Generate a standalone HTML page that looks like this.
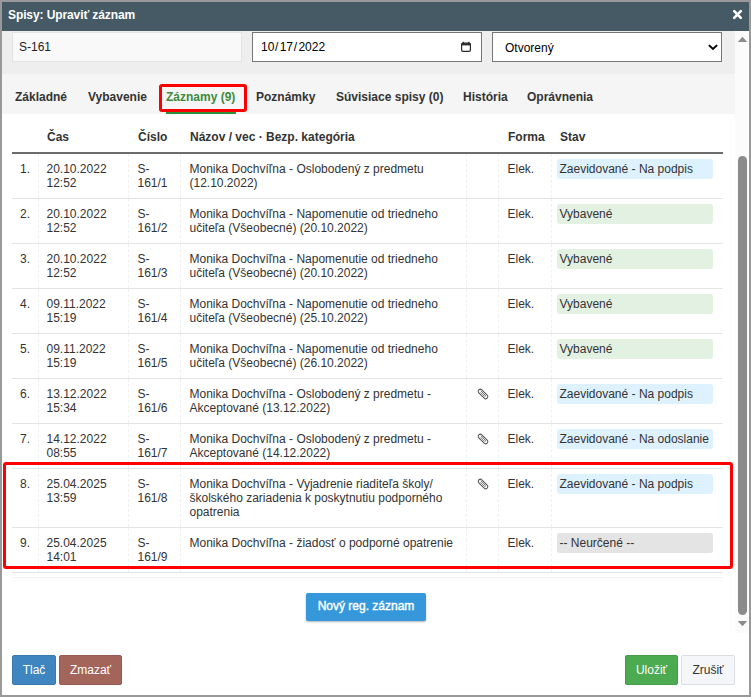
<!DOCTYPE html>
<html lang="sk">
<head>
<meta charset="utf-8">
<title>Spisy: Upraviť záznam</title>
<style>
*{box-sizing:border-box;margin:0;padding:0}
html,body{width:751px;height:697px;overflow:hidden;background:#fff}
body{font-family:"Liberation Sans",Arial,sans-serif;font-size:12px;line-height:14px;color:#333;position:relative}
#frame{position:absolute;left:0;top:0;width:751px;height:697px;border:2px solid #999;pointer-events:none;z-index:50}
#hdr{position:absolute;left:2px;top:2px;width:747px;height:29px;background:#455a64;color:#fff;font-weight:bold;padding:6px 0 0 6px;letter-spacing:-0.1px}
#close{position:absolute;left:729px;top:6px;width:13px;height:13px}
#top{position:absolute;left:2px;top:31px;width:733px;height:43px;background:#eee}
.inp{position:absolute;top:1px;height:30px;width:230px;background:#fff;border:1px solid #767676;padding:7px 0 0 7px;color:#000;font-size:12px}
#i1{left:10px;background:#f9f9f9;border-color:#e3e3e3;color:#222;padding-left:6px}
#i2{left:250px;padding-left:8px}
#i3{left:490px;padding-left:12px;padding-top:8px}
.sg{padding:0 1px}
.sg:first-child{padding-left:0.7px}
#tabs{position:absolute;left:2px;top:74px;width:733px;height:40px;background:#f5f5f5;font-weight:bold}
#tabs span{position:absolute;top:16px;white-space:nowrap}
#tabs .act{color:#3c8b3c}
#uline{position:absolute;left:164px;top:38px;width:70px;height:2px;background:#2f8f3a}
.red{position:absolute;border:3px solid #fe0000;border-radius:3px;z-index:20}
#sb{position:absolute;left:735px;top:31px;width:14px;height:602px;background:#fbfbfb}
#thumb{position:absolute;left:3px;top:125px;width:9px;height:459px;border-radius:4.5px;background:#8b8b8b}
.tri{position:absolute;left:3px;width:0;height:0;border-left:4.5px solid transparent;border-right:4.5px solid transparent}
#tu{top:6px;border-bottom:5px solid #8b8b8b}
#td{top:590px;border-top:5px solid #8b8b8b}
table{position:absolute;left:12px;top:122px;width:711px;border-collapse:collapse;table-layout:fixed}
th{text-align:left;font-weight:bold;padding:8px 0 8px 9px;border-bottom:2px solid #6c6c6c;height:31px;white-space:nowrap}
td{vertical-align:top;padding:8px 0 8px 8px;border-bottom:1px solid #e4e4e4;border-left:1px dashed #f1f1f1;height:45px}
td:first-child{border-left:none;padding-left:8px}
tr.l3 td{height:59px}
td:nth-child(3),td:nth-child(4),td:nth-child(6){padding-left:9px}
th:nth-child(3),th:nth-child(4),th:nth-child(6){padding-left:10px}
.bd{display:block;margin:-3px 0 0 -3px;width:156px;height:20px;padding:3px;border-radius:3px;white-space:nowrap}
.b1{background:#ddf2fe}
.b2{background:#e3f1e3}
.b3{background:#e4e4e4}
.clip{display:block;margin:0 0 0 1px}
.btn{position:absolute;height:30px;border-radius:2px;border:1px solid;color:#fff;text-align:center;padding-top:7px;font-size:12px}
#new{position:absolute;left:306px;top:593px;width:120px;height:28px;background:#3498db;border-radius:2px;color:#fff;-webkit-text-stroke:0.4px #fff;text-align:center;padding-top:6px;box-shadow:0 1px 2px rgba(0,0,0,.3)}
</style>
</head>
<body>
<div id="hdr">Spisy: Upraviť záznam
<svg id="close" viewBox="0 0 13 13"><path d="M3.2 3.2 L9.8 9.8 M9.8 3.2 L3.2 9.8" stroke="#fff" stroke-width="2.6" stroke-linecap="round"/></svg>
</div>
<div id="top">
<div class="inp" id="i1">S-161</div>
<div class="inp" id="i2"><span style="margin-right:.6px">10</span><span style="margin-right:1.4px">/</span><span style="margin-right:.7px">17</span><span style="margin-right:1.3px">/</span>2022
<svg style="position:absolute;left:207px;top:8px" width="12" height="12" viewBox="0 0 12 12"><rect x="1.6" y="2.2" width="8.8" height="8.2" rx="1.4" fill="none" stroke="#2a2a2a" stroke-width="1.2"/><rect x="1.6" y="2.2" width="8.8" height="2.2" fill="#2a2a2a"/><rect x="2.6" y="0.8" width="1.4" height="2" fill="#2a2a2a"/><rect x="8" y="0.8" width="1.4" height="2" fill="#2a2a2a"/></svg>
</div>
<div class="inp" id="i3">Otvorený
<svg style="position:absolute;left:214px;top:10px" width="12" height="9" viewBox="0 0 12 9"><path d="M1.9 2.1 L6 6 L10.1 2.1" fill="none" stroke="#000" stroke-width="1.9"/></svg>
</div>
</div>
<div id="tabs">
<span style="left:13px">Základné</span>
<span style="left:86px">Vybavenie</span>
<span class="act" style="left:164px">Záznamy (9)</span>
<span style="left:254px">Poznámky</span>
<span style="left:334px">Súvisiace spisy (0)</span>
<span style="left:461px">História</span>
<span style="left:525px">Oprávnenia</span>
<div id="uline"></div>
</div>
<div class="red" style="left:159px;top:84px;width:88px;height:28px"></div>
<div id="sb"><svg width="14" height="602" style="position:absolute;left:0;top:0"><path d="M2.8 11 L12.2 11 L7.5 5.8 Z M2.8 590 L12.2 590 L7.5 595.2 Z" fill="#8b8b8b"/></svg><div id="thumb"></div></div>

<table>
<colgroup><col style="width:26px"><col style="width:90px"><col style="width:52px"><col style="width:286px"><col style="width:32px"><col style="width:53px"><col style="width:172px"></colgroup>
<thead><tr><th></th><th>Čas</th><th>Číslo</th><th>Názov / vec · Bezp. kategória</th><th></th><th>Forma</th><th>Stav</th></tr></thead>
<tbody>
<tr><td>1.</td><td>20.10.2022<br>12:52</td><td>S-<br>161/1</td><td>Monika Dochvíľna - Oslobodený z predmetu<br>(12.10.2022)</td><td></td><td>Elek.</td><td><span class="bd b1">Zaevidované - Na podpis</span></td></tr>
<tr><td>2.</td><td>20.10.2022<br>12:52</td><td>S-<br>161/2</td><td>Monika Dochvíľna - Napomenutie od triedneho<br>učiteľa (Všeobecné) (20.10.2022)</td><td></td><td>Elek.</td><td><span class="bd b2">Vybavené</span></td></tr>
<tr><td>3.</td><td>20.10.2022<br>12:52</td><td>S-<br>161/3</td><td>Monika Dochvíľna - Napomenutie od triedneho<br>učiteľa (Všeobecné) (20.10.2022)</td><td></td><td>Elek.</td><td><span class="bd b2">Vybavené</span></td></tr>
<tr><td>4.</td><td>09.11.2022<br>15:19</td><td>S-<br>161/4</td><td>Monika Dochvíľna - Napomenutie od triedneho<br>učiteľa (Všeobecné) (25.10.2022)</td><td></td><td>Elek.</td><td><span class="bd b2">Vybavené</span></td></tr>
<tr><td>5.</td><td>09.11.2022<br>15:19</td><td>S-<br>161/5</td><td>Monika Dochvíľna - Napomenutie od triedneho<br>učiteľa (Všeobecné) (26.10.2022)</td><td></td><td>Elek.</td><td><span class="bd b2">Vybavené</span></td></tr>
<tr><td>6.</td><td>13.12.2022<br>15:34</td><td>S-<br>161/6</td><td>Monika Dochvíľna - Oslobodený z predmetu -<br>Akceptované (13.12.2022)</td><td><svg class="clip" width="14" height="14" viewBox="0 0 14 14"><g transform="rotate(-45 7 7)" fill="none" stroke="#555"><rect x="4.9" y="1.1" width="4.2" height="11.8" rx="2.1" stroke-width="1.05"/><path d="M6.4 4 V9.6 a0.6 0.6 0 0 0 1.3 0 V3.2" stroke-width="0.9" stroke="#777"/></g></svg></td><td>Elek.</td><td><span class="bd b1">Zaevidované - Na podpis</span></td></tr>
<tr><td>7.</td><td>14.12.2022<br>08:55</td><td>S-<br>161/7</td><td>Monika Dochvíľna - Oslobodený z predmetu -<br>Akceptované (14.12.2022)</td><td><svg class="clip" width="14" height="14" viewBox="0 0 14 14"><g transform="rotate(-45 7 7)" fill="none" stroke="#555"><rect x="4.9" y="1.1" width="4.2" height="11.8" rx="2.1" stroke-width="1.05"/><path d="M6.4 4 V9.6 a0.6 0.6 0 0 0 1.3 0 V3.2" stroke-width="0.9" stroke="#777"/></g></svg></td><td>Elek.</td><td><span class="bd b1">Zaevidované - Na odoslanie</span></td></tr>
<tr class="l3"><td>8.</td><td>25.04.2025<br>13:59</td><td>S-<br>161/8</td><td>Monika Dochvíľna - Vyjadrenie riaditeľa školy/<br>školského zariadenia k poskytnutiu podporného<br>opatrenia</td><td><svg class="clip" width="14" height="14" viewBox="0 0 14 14"><g transform="rotate(-45 7 7)" fill="none" stroke="#555"><rect x="4.9" y="1.1" width="4.2" height="11.8" rx="2.1" stroke-width="1.05"/><path d="M6.4 4 V9.6 a0.6 0.6 0 0 0 1.3 0 V3.2" stroke-width="0.9" stroke="#777"/></g></svg></td><td>Elek.</td><td><span class="bd b1">Zaevidované - Na podpis</span></td></tr>
<tr><td>9.</td><td>25.04.2025<br>14:01</td><td>S-<br>161/9</td><td>Monika Dochvíľna - žiadosť o podporné opatrenie</td><td></td><td>Elek.</td><td><span class="bd b3">-- Neurčené --</span></td></tr>
</tbody>
</table>
<div class="red" style="left:3px;top:462px;width:730px;height:107px"></div>

<div style="position:absolute;left:12px;top:577px;width:711px;height:1px;background:#f3f3f3"></div>
<div id="new">Nový reg. záznam</div>
<div class="btn" style="left:12px;top:655px;width:44px;background:#3f85c0;border-color:#3a7ab2">Tlač</div>
<div class="btn" style="left:59px;top:655px;width:63px;background:#a3645a;border-color:#975b52">Zmazať</div>
<div class="btn" style="left:625px;top:655px;width:53px;background:#4caa50;border-color:#449c48">Uložiť</div>
<div class="btn" style="left:681px;top:655px;width:54px;background:#f5f6fa;border-color:#dcdde1;color:#333">Zrušiť</div>
<div id="frame"></div>
</body>
</html>
